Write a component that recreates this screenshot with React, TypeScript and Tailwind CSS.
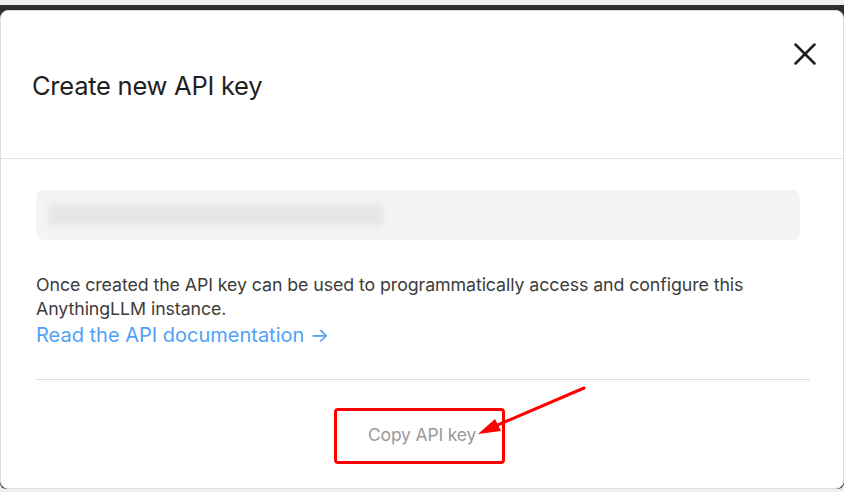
import { X } from "lucide-react";

export default function App() {
  return (
    <div
      className="h-[492px] w-[844px] overflow-hidden bg-[#f0f0f0] pt-[5px]"
      style={{ fontFamily: "Inter, 'Open Sans', sans-serif" }}
    >
      <div className="h-[484px] rounded-b-md bg-[#2e2e2e] pt-[5px]">
        <div className="relative flex h-[479px] flex-col rounded-lg border border-[#dcdcdc] bg-white">
          {/* header */}
          <div className="flex h-[148px] items-start justify-between border-b border-[#e2e2e2] pl-[31px] pr-[19px]">
            <h3 className="mt-[59px] text-[25.5px] leading-8 tracking-[-0.01em] text-[#1f1f1f]">
              Create new API key
            </h3>
            <button className="mt-[24px] text-[#1f1f1f]">
              <X size={38} strokeWidth={1.6} />
            </button>
          </div>

          {/* body */}
          <div className="flex flex-col pl-[35px] pr-[33px]">
            <div className="mt-[31px] flex h-[50px] w-[764px] items-center rounded-lg bg-[#f4f4f4] px-3">
              <div className="h-[22px] w-[335px] rounded bg-[#e6e6e6] blur-[3px]" />
            </div>
            <p className="mt-[33px] text-[17.8px] leading-6 tracking-[-0.005em] text-[#3c3c3c]">
              Once created the API key can be used to programmatically access and configure this
              <br />
              AnythingLLM instance.
            </p>
            <a className="text-[20px] leading-7 tracking-[0em] text-[#4fa2f7]">
              Read the API documentation →
            </a>
            <div className="mt-[30px] border-t border-[#dedede]" />
          </div>

          {/* footer */}
          <div className="flex flex-1 items-center justify-center pt-[3px]">
            <button className="text-[17.5px] tracking-[-0.01em] text-[#9a9a9a]">Copy API key</button>
          </div>

          {/* annotation */}
          <div className="absolute left-[333px] top-[397px] h-[56px] w-[171px] rounded-sm border-[3px] border-[#ff0000]" />
          <svg className="absolute left-0 top-0" width="844" height="479" viewBox="0 10 844 479">
            <line x1="583" y1="387" x2="492" y2="426" stroke="#ff0000" strokeWidth="3" strokeLinecap="round" />
            <polygon points="477,433 494,418 500,430" fill="#ff0000" />
          </svg>
        </div>
      </div>
    </div>
  );
}
